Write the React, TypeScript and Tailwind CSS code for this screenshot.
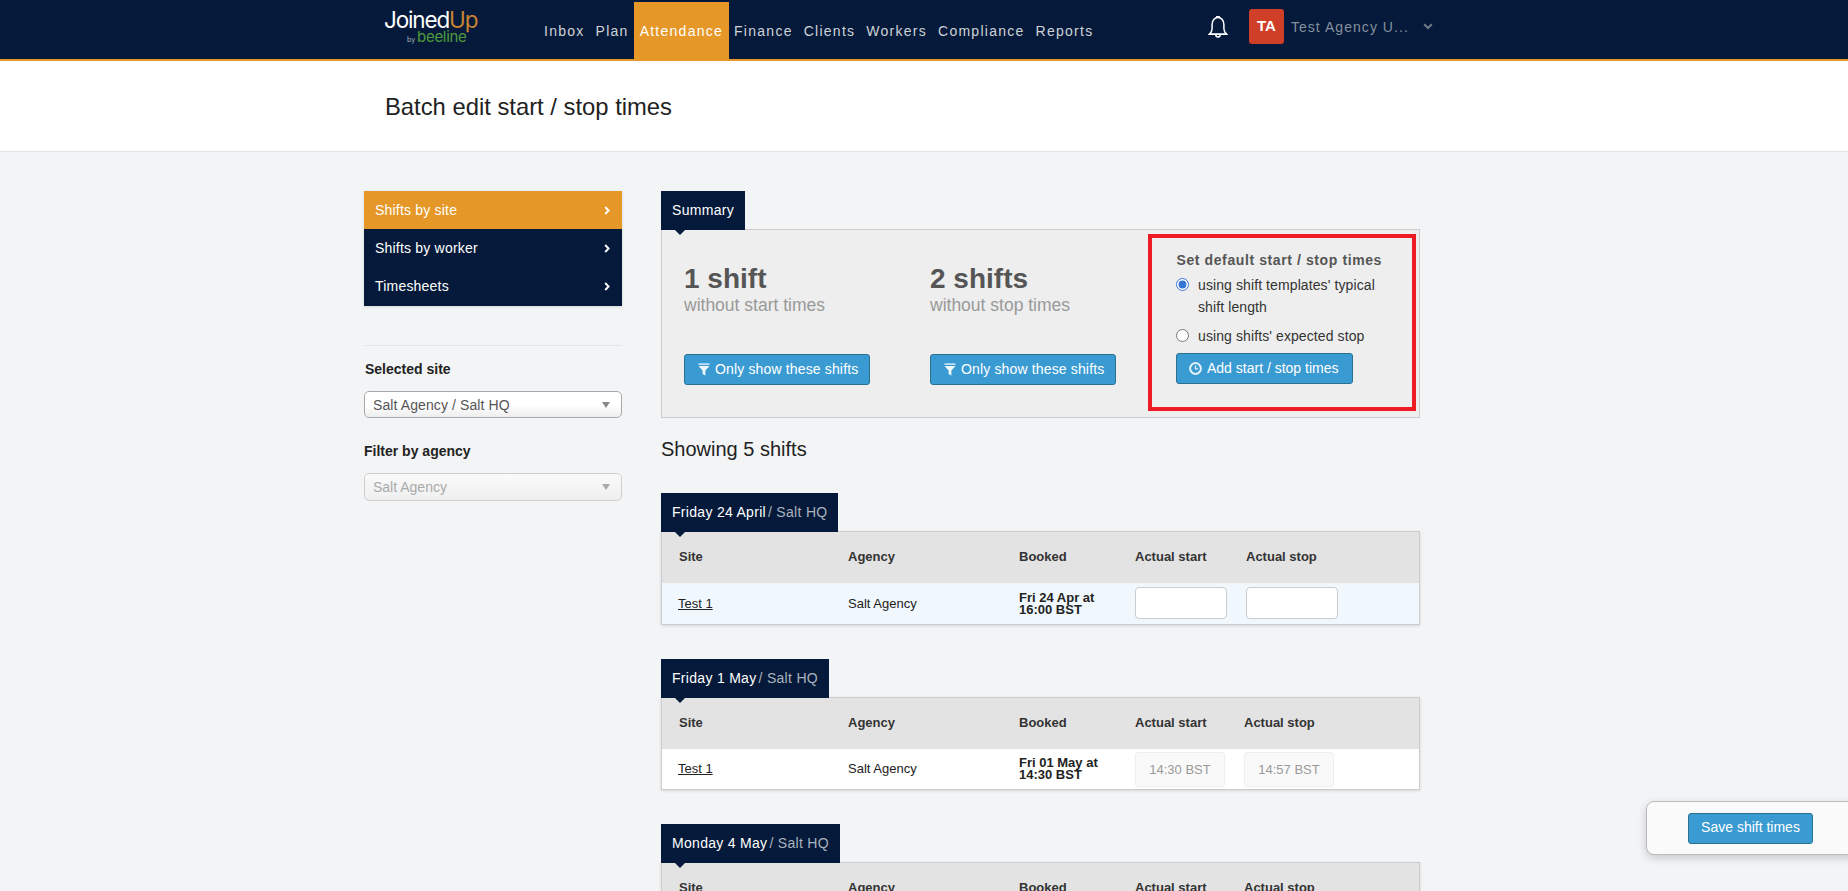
import React from 'react';

const navItems = ['Inbox', 'Plan', 'Attendance', 'Finance', 'Clients', 'Workers', 'Compliance', 'Reports'];

const sideItems = ['Shifts by site', 'Shifts by worker', 'Timesheets'];

interface ShiftRow {
  rowHeight: string;
  rowBg: string;
  booked: [string, string];
  start?: string;
  stop?: string;
}

interface ShiftTable {
  day: string;
  cols: string;
  headPad: string;
  row?: ShiftRow;
}

const tables: ShiftTable[] = [
  {
    day: 'Friday 24 April',
    cols: 'grid-cols-[186px_171px_116px_111px_1fr]',
    headPad: 'pb-[2px]',
    row: {
      rowHeight: 'h-[41px]',
      rowBg: 'bg-[#f0f8fd]',
      booked: ['Fri 24 Apr at', '16:00 BST'],
    },
  },
  {
    day: 'Friday 1 May',
    cols: 'grid-cols-[186px_171px_116px_109px_1fr]',
    headPad: 'pb-[1px]',
    row: {
      rowHeight: 'h-[40px]',
      rowBg: 'bg-white',
      booked: ['Fri 01 May at', '14:30 BST'],
      start: '14:30 BST',
      stop: '14:57 BST',
    },
  },
  // only the header of this one is above the fold
  {
    day: 'Monday 4 May',
    cols: 'grid-cols-[186px_171px_116px_109px_1fr]',
    headPad: 'pb-[1px]',
  },
];

const FilterIcon = () => (
  <svg width="12" height="13" viewBox="0 0 12 13" className="shrink-0">
    <path d="M0.5 0.5h11v1.2h-11z" fill="#fff" />
    <path d="M0.5 3h11L7.4 7.4v5.1L4.6 11V7.4z" fill="#fff" opacity="0.92" />
  </svg>
);

const ClockIcon = () => (
  <svg width="13" height="13" viewBox="0 0 13 13" className="shrink-0">
    <circle cx="6.5" cy="6.5" r="5.4" fill="none" stroke="#fff" strokeOpacity="0.85" strokeWidth="2" />
    <path d="M6.5 3.4v3.4h2.6" fill="none" stroke="#fff" strokeOpacity="0.85" strokeWidth="1.3" />
  </svg>
);

const Chevron = () => (
  <svg width="6" height="9" viewBox="0 0 6 9" className="shrink-0">
    <path d="M1.2 1L4.6 4.5L1.2 8" fill="none" stroke="#fff" strokeWidth="1.9" />
  </svg>
);

const BlueButton: React.FC<{ className?: string; children: React.ReactNode }> = ({ className = '', children }) => (
  <button className={`flex h-[31px] items-center rounded-[3px] border border-[#2b7290] bg-[#3a9bd3] pb-[1px] text-[14px] text-white ${className}`}>
    {children}
  </button>
);

const Tab: React.FC<{ children: React.ReactNode }> = ({ children }) => (
  <div className="relative z-10 flex h-[39px] w-fit items-center bg-[#051a3a] px-[11px] text-[14px] tracking-[0.3px] text-white">
    {children}
    <div className="absolute left-[14px] top-full h-0 w-0 border-x-[5px] border-t-[5px] border-x-transparent border-t-[#051a3a]" />
  </div>
);

const FakeSelect: React.FC<{ label: string; disabled?: boolean }> = ({ label, disabled }) => (
  <div
    className={
      disabled
        ? 'flex h-[28px] items-center justify-between rounded-[5px] border border-[#cfcfcf] bg-gradient-to-b from-[#fafafa] to-[#efefef] pl-[8px] pr-[11px] text-[14px] text-[#aaaaaa]'
        : 'flex h-[27px] items-center justify-between rounded-[5px] border border-[#a8a8a8] bg-gradient-to-b from-white via-white to-[#eeeeee] pl-[8px] pr-[11px] pt-[1px] text-[14px] tracking-[0.1px] text-[#555555]'
    }
  >
    <span>{label}</span>
    <span className={`h-0 w-0 border-x-[4px] border-t-[6px] border-x-transparent ${disabled ? 'border-t-[#aaaaaa]' : 'border-t-[#888888]'}`} />
  </div>
);

const Summary: React.FC<{ count: string; label: string }> = ({ count, label }) => (
  <div className="flex w-[246px] flex-col pt-[31px]">
    <div className="text-[28px] font-bold leading-[36px] text-[#555555]">{count}</div>
    <div className="-mt-[1px] text-[17.5px] leading-[18px] text-[#999999]">{label}</div>
    <BlueButton className="mt-[40px] w-[186px] gap-[5px] pl-[13px] tracking-[0.15px]">
      <FilterIcon />
      Only show these shifts
    </BlueButton>
  </div>
);

const TimeInput: React.FC<{ value?: string }> = ({ value }) =>
  value ? (
    <input
      readOnly
      disabled
      value={value}
      className="h-[35px] w-[90px] rounded-[3px] border border-[#eeeeee] bg-[#f9f9f9] text-center text-[13px] text-[#999999]"
    />
  ) : (
    <input readOnly className="mb-[1px] h-[32px] w-[92px] rounded-[4px] border border-[#cccccc] bg-white" />
  );

const Table: React.FC<{ table: ShiftTable }> = ({ table }) => (
  <section className="mb-[34px]">
    <Tab>
      <span>{table.day}</span>
      <span className="ml-[2px] text-[#aab2bd]">/ Salt HQ</span>
    </Tab>
    <div className="-mt-[1px] border border-[#cccccc] shadow-[0_1px_3px_rgba(0,0,0,0.12)]">
      <div className={`grid h-[51px] items-center bg-[#e3e3e3] text-[13px] font-bold text-[#333333] ${table.cols} ${table.headPad}`}>
        <div className="pl-[17px]">Site</div>
        <div>Agency</div>
        <div>Booked</div>
        <div>Actual start</div>
        <div>Actual stop</div>
      </div>
      {table.row && (
        <div className={`grid items-center text-[13px] text-[#222222] ${table.row.rowHeight} ${table.row.rowBg} ${table.cols}`}>
          <div className="pl-[16px] underline">Test 1</div>
          <div>Salt Agency</div>
          <div className="font-bold leading-[12px]">
            {table.row.booked[0]}
            <br />
            {table.row.booked[1]}
          </div>
          <TimeInput value={table.row.start} />
          <TimeInput value={table.row.stop} />
        </div>
      )}
    </div>
  </section>
);

export default function App() {
  return (
    <div className="relative h-screen overflow-hidden bg-[#f3f4f6] font-['Liberation_Sans',Arial,sans-serif] text-[#222222]">
      {/* top bar */}
      <header className="flex h-[61px] border-b-2 border-[#e59727] bg-[#051a3a] pl-[384px]">
        <div className="w-[154.5px] pt-[8px]">
          <div className="font-['Inter',sans-serif] text-[22.5px] font-normal leading-[24px] tracking-[-1.15px] text-white">
            Joined<span className="text-[#c9822f]">Up</span>
          </div>
          <div className="-mt-[1px] ml-[23px] flex items-baseline gap-[2px] font-['Inter',sans-serif] leading-[11px]">
            <span className="text-[7px] text-[#aab2bd]">by</span>
            <span className="text-[15px] tracking-[-0.3px] text-[#4f9a3a]">beeline</span>
          </div>
        </div>
        <nav className="flex items-stretch pt-[2px] text-[14px] tracking-[1.26px]">
          {navItems.map(item => (
            <a
              key={item}
              className={
                item === 'Attendance'
                  ? 'flex items-center bg-[#e59727] px-[5.5px] pt-[2px] text-white'
                  : 'flex items-center px-[5.5px] pt-[2px] text-[#cfd3d8]'
              }
            >
              {item}
            </a>
          ))}
        </nav>
        <div className="ml-[109px] flex h-[59px] items-start pt-[9px]">
          <svg width="20" height="24" viewBox="0 0 20 24" className="mr-[21px] mt-[6px]">
            <path
              d="M1.5 19.2c1.6-1.4 2.6-3 2.6-5.6V9.4C4.1 5.6 6.6 2.6 10 2.6s5.9 3 5.9 6.8v4.2c0 2.6 1 4.2 2.6 5.6z"
              fill="none"
              stroke="#fff"
              strokeWidth="1.5"
            />
            <path d="M0.8 19.2h18.4" stroke="#fff" strokeWidth="1.5" />
            <path d="M8 1.8h4" stroke="#fff" strokeWidth="1.5" />
            <path d="M7.8 19.8a2.2 2.2 0 0 0 4.4 0" fill="none" stroke="#fff" strokeWidth="1.5" />
          </svg>
          <div className="flex h-[35px] w-[35px] items-center justify-center rounded-[3px] bg-[#cf3e26] text-[15px] font-bold text-white">
            TA
          </div>
          <div className="ml-[7px] mt-[9px] w-[132px] text-[14px] leading-[18px] tracking-[1.05px] text-[#84919f]">
            Test Agency U...
          </div>
          <svg width="10" height="7" viewBox="0 0 10 7" className="mt-[14px]">
            <path d="M1.2 1.2L5 5L8.8 1.2" fill="none" stroke="#6f7885" strokeWidth="2" />
          </svg>
        </div>
      </header>

      {/* page title */}
      <div className="flex h-[91px] items-center border-b border-[#e4e4e4] bg-white pl-[385px] pt-[2px] text-[23.8px] text-[#222222]">
        Batch edit start / stop times
      </div>

      <div className="flex pl-[364px] pt-[39px]">
        {/* sidebar */}
        <aside className="w-[258px]">
          <ul className="bg-[#051a3a] text-[14px] tracking-[0.2px] text-white shadow-[0_1px_3px_rgba(0,0,0,0.12)]">
            {sideItems.map((item, i) => (
              <li
                key={item}
                className={`flex h-[38.4px] items-center justify-between pl-[11px] pr-[12px] ${i === 0 ? 'bg-[#e59727]' : ''}`}
              >
                {item}
                <Chevron />
              </li>
            ))}
          </ul>
          <div className="mt-[39px] border-t border-[#e6e6e6] pt-[14px]">
            <div className="pl-[1px] text-[14px] font-bold leading-[18px] text-[#222222]">Selected site</div>
            <div className="mt-[13px]">
              <FakeSelect label="Salt Agency / Salt HQ" />
            </div>
            <div className="mt-[24px] text-[14px] font-bold leading-[18px] text-[#222222]">Filter by agency</div>
            <div className="mt-[13px]">
              <FakeSelect label="Salt Agency" disabled />
            </div>
          </div>
        </aside>

        {/* main column */}
        <main className="ml-[39px] w-[759px]">
          <Tab>Summary</Tab>
          <div className="relative -mt-[1px] flex h-[189px] border border-[#cccccc] bg-[#eeeeee] pl-[22px]">
            <Summary count="1 shift" label="without start times" />
            <Summary count="2 shifts" label="without stop times" />
            <div className="pt-[20px]">
              <div className="pl-[0.5px] text-[14px] font-bold leading-[20px] tracking-[0.6px] text-[#555555]">Set default start / stop times</div>
              <label className="mt-[4px] flex w-[210px] items-start gap-[9px] text-[14px] leading-[22px] tracking-[0.1px] text-[#333333]">
                <input type="radio" name="mode" defaultChecked className="mt-[4px] h-[13px] w-[13px] shrink-0 accent-[#3575d6]" />
                <span>using shift templates' typical shift length</span>
              </label>
              <label className="mt-[7px] flex items-start gap-[9px] text-[14px] leading-[22px] tracking-[0.1px] text-[#333333]">
                <input type="radio" name="mode" className="mt-[4px] h-[13px] w-[13px] shrink-0" />
                <span>using shifts' expected stop</span>
              </label>
              <BlueButton className="mt-[6px] w-[177px] gap-[5px] pl-[12px]">
                <ClockIcon />
                Add start / stop times
              </BlueButton>
            </div>
            {/* red annotation round the defaults block */}
            <div className="absolute left-[486px] top-[4px] h-[177px] w-[268px] border-4 border-[#ed1c24]" />
          </div>

          <h2 className="mb-[32px] mt-[19px] text-[20px] font-normal leading-[24px] text-[#222222]">Showing 5 shifts</h2>

          {tables.map(table => (
            <Table key={table.day} table={table} />
          ))}
        </main>
      </div>

      {/* floating save bar */}
      <div className="absolute left-[1646px] top-[801px] flex h-[54px] w-[210px] items-center rounded-l-[8px] border border-[#bbbbbb] bg-[#fafafa] pl-[41px] shadow-[0_3px_8px_rgba(0,0,0,0.18)]">
        <BlueButton className="w-[125px] justify-center">Save shift times</BlueButton>
      </div>
    </div>
  );
}
